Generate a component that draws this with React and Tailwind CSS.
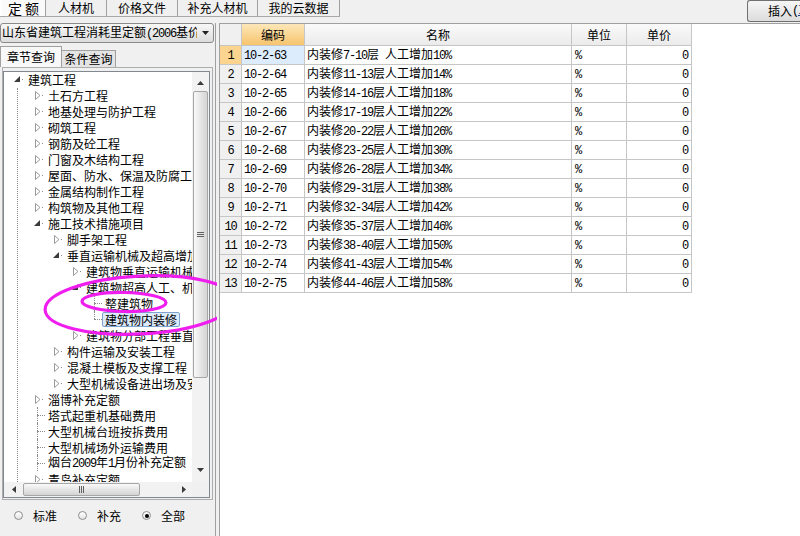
import React from 'react';

const ASCII = /^[\x00-\x7F]+$/;
function Mix({ t }) {
  return (
    <span className="whitespace-pre">
      {t
        .split(/([\x00-\x7F]+)/)
        .filter(Boolean)
        .map((p, i) =>
          ASCII.test(p) ? (
            <span key={i} className="font-['Liberation_Mono',monospace] text-[12px] tracking-[-1.2px]">
              {p}
            </span>
          ) : (
            <React.Fragment key={i}>{p}</React.Fragment>
          )
        )}
    </span>
  );
}

const tree = [
  { l: 0, t: '建筑工程', k: 'open' },
  { l: 1, t: '土石方工程', k: 'closed' },
  { l: 1, t: '地基处理与防护工程', k: 'closed' },
  { l: 1, t: '砌筑工程', k: 'closed' },
  { l: 1, t: '钢筋及砼工程', k: 'closed' },
  { l: 1, t: '门窗及木结构工程', k: 'closed' },
  { l: 1, t: '屋面、防水、保温及防腐工程', k: 'closed' },
  { l: 1, t: '金属结构制作工程', k: 'closed' },
  { l: 1, t: '构筑物及其他工程', k: 'closed' },
  { l: 1, t: '施工技术措施项目', k: 'open' },
  { l: 2, t: '脚手架工程', k: 'closed' },
  { l: 2, t: '垂直运输机械及超高增加费', k: 'open' },
  { l: 3, t: '建筑物垂直运输机械', k: 'closed' },
  { l: 3, t: '建筑物超高人工、机械增加', k: 'open' },
  { l: 4, t: '整建筑物', k: 'leaf' },
  { l: 4, t: '建筑物内装修', k: 'leaf', sel: true, last: true },
  { l: 3, t: '建筑物分部工程垂直运输', k: 'closed' },
  { l: 2, t: '构件运输及安装工程', k: 'closed' },
  { l: 2, t: '混凝土模板及支撑工程', k: 'closed' },
  { l: 2, t: '大型机械设备进出场及安拆', k: 'closed' },
  { l: 1, t: '淄博补充定额', k: 'closed' },
  { l: 1, t: '塔式起重机基础费用', k: 'leaf' },
  { l: 1, t: '大型机械台班按拆费用', k: 'leaf' },
  { l: 1, t: '大型机械场外运输费用', k: 'leaf' },
  { l: 1, t: '烟台2009年1月份补充定额', k: 'leaf' },
  { l: 1, t: '青岛补充定额', k: 'closed' },
];

const indent = ['w-[10px]', 'w-[30px]', 'w-[49px]', 'w-[68px]', 'w-[87px]'];

function TreeRow({ n }) {
  return (
    <div className="flex h-[16px] shrink-0 items-center whitespace-nowrap">
      <span className={`${indent[n.l]} shrink-0`} />
      <span className="relative h-[16px] w-[11px] shrink-0">
        {n.k === 'closed' && (
          <>
            <svg className="absolute left-[1px] top-[4px]" width="6" height="9">
              <polygon points="0.5,0.5 5,4.5 0.5,8.5" fill="white" stroke="#9a9a9a" strokeWidth="1" />
            </svg>
            <span className="absolute left-[8px] top-[8px] h-px w-px bg-[#8a8a8a]" />
          </>
        )}
        {n.k === 'open' && (
          <>
            <svg className="absolute left-[0px] top-[5px]" width="6" height="6">
              <polygon points="6,0 6,6 0,6" fill="#3a3a3a" />
            </svg>
            <span className="absolute left-[8px] top-[8px] h-px w-px bg-[#8a8a8a]" />
          </>
        )}
        {n.k === 'leaf' && (
          <>
            <span className="absolute left-[3px] top-[8px] w-[8px] border-t border-dotted border-[#8a8a8a]" />
            <span
              className={`absolute left-[3px] top-0 border-l border-dotted border-[#8a8a8a] ${
                n.last ? 'h-[8px]' : 'h-[16px]'
              }`}
            />
          </>
        )}
      </span>
      <span
        className={`border px-[2px] leading-[13px] ${
          n.sel ? 'rounded-[2px] border-[#7da2ce] bg-[#dcebfc]' : 'border-transparent'
        }`}
      >
        <Mix t={n.t} />
      </span>
    </div>
  );
}

function VScroll() {
  return (
    <div className="flex w-[17px] shrink-0 flex-col bg-[#f2f2f2]">
      <div className="flex h-[19px] shrink-0 items-start justify-center pt-[9px]">
        <svg width="7" height="4">
          <polygon points="3.5,0 7,4 0,4" fill="#3a3a3a" />
        </svg>
      </div>
      <div className="mx-[1px] flex h-[287px] shrink-0 items-center justify-center rounded-[2px] border border-[#a6a6a6] bg-linear-to-r from-[#f9f9f9] to-[#d4d4d4]">
        <div className="flex flex-col gap-[1px]">
          <span className="h-px w-[7px] bg-[#606060]" />
          <span className="h-px w-[7px] bg-[#606060]" />
          <span className="h-px w-[7px] bg-[#606060]" />
        </div>
      </div>
      <div className="flex-1" />
      <div className="flex h-[17px] shrink-0 items-start justify-center pt-[3px]">
        <svg width="7" height="4">
          <polygon points="0,0 7,0 3.5,4" fill="#3a3a3a" />
        </svg>
      </div>
    </div>
  );
}

function HScroll() {
  return (
    <div className="flex h-[15px] shrink-0 bg-[#f2f2f2]">
      <div className="flex w-[188px] items-center">
        <div className="flex w-[19px] shrink-0 justify-center">
          <svg width="4" height="7">
            <polygon points="4,0 4,7 0,3.5" fill="#3a3a3a" />
          </svg>
        </div>
        <div className="flex h-[13px] w-[117px] shrink-0 items-center justify-center rounded-[2px] border border-[#a6a6a6] bg-linear-to-b from-[#f9f9f9] to-[#d4d4d4]">
          <div className="flex gap-[1px]">
            <span className="h-[7px] w-px bg-[#606060]" />
            <span className="h-[7px] w-px bg-[#606060]" />
            <span className="h-[7px] w-px bg-[#606060]" />
          </div>
        </div>
        <div className="flex-1" />
        <div className="flex w-[17px] shrink-0 justify-center">
          <svg width="4" height="7">
            <polygon points="0,0 4,3.5 0,7" fill="#3a3a3a" />
          </svg>
        </div>
      </div>
      <div className="flex-1 bg-[#f0f0f0]" />
    </div>
  );
}

function Radio({ label, checked }) {
  return (
    <div className="flex items-center gap-[10px]">
      <span className="flex h-[9px] w-[9px] items-center justify-center rounded-full border border-[#8e8e8e] bg-linear-to-b from-[#ffffff] to-[#e4e4e4]">
        {checked && <span className="h-[4px] w-[4px] rounded-full bg-black" />}
      </span>
      <span>{label}</span>
    </div>
  );
}

const ranges = ['7-10层 ', '11-13层', '14-16层', '17-19层', '20-22层', '23-25层', '26-28层', '29-31层', '32-34层', '35-37层', '38-40层', '41-43层', '44-46层'];
const rows = ranges.map((r, i) => ({
  n: String(i + 1),
  code: `10-2-${63 + i}`,
  name: `内装修${r}人工增加${10 + i * 4}%`,
}));

const cell = 'shrink-0 border-r border-b border-[#c6c6c6] overflow-hidden whitespace-nowrap';

export default function App() {
  return (
    <div className="relative flex h-[536px] w-[800px] flex-col overflow-hidden bg-[#f0f0f0] font-['Noto_Sans_CJK_SC',sans-serif] text-[12px] leading-[16px] text-black">
      {/* top bar */}
      <div className="flex h-[23px] shrink-0 items-start">
        <div className="flex h-[17px] border-b border-[#a8a8a8]">
          <div className="flex h-[16px] w-[46px] items-center justify-center border-l-2 border-r border-l-white border-r-[#a0a0a0] bg-[#fafafa] pl-[3px] text-[14px] tracking-[3px]">
            定额
          </div>
          <div className="flex h-[16px] w-[61px] items-center justify-center border-r border-[#a0a0a0]">人材机</div>
          <div className="flex h-[16px] w-[71px] items-center justify-center border-r border-[#a0a0a0]">价格文件</div>
          <div className="flex h-[16px] w-[80px] items-center justify-center border-r border-[#a0a0a0]">补充人材机</div>
          <div className="flex h-[16px] w-[82px] items-center justify-center border-r border-[#a0a0a0]">我的云数据</div>
        </div>
        <div className="flex-1" />
        <div className="flex h-[22px] w-[53px] items-center overflow-hidden whitespace-nowrap rounded-l-[3px] border border-r-0 border-[#707070] bg-linear-to-b from-[#f6f6f6] to-[#dcdcdc] pl-[20px]">
          插入
          <span className="font-['Liberation_Mono',monospace] text-[12px] tracking-[-1.2px]">
            (<span className="text-[#1c3c8c] underline">I</span>)
          </span>
        </div>
      </div>

      {/* body */}
      <div className="flex min-h-0 flex-1">
        {/* left panel */}
        <div className="flex w-[215px] shrink-0 flex-col">
          <div className="flex h-[20px] w-[214px] shrink-0 items-center rounded-[3px] border border-[#8a8a8a] bg-linear-to-b from-[#f7f7f7] to-[#dcdcdc]">
            <div className="w-[196px] overflow-hidden whitespace-nowrap pl-[1px]">
              <Mix t="山东省建筑工程消耗里定额(2006基价)" />
            </div>
            <div className="flex flex-1 justify-center">
              <svg width="7" height="4">
                <polygon points="0,0 7,0 3.5,4" fill="#222" />
              </svg>
            </div>
          </div>
          <div className="mt-[1px] flex h-[23px] shrink-0 items-end">
            <div className="flex h-[21px] w-[62px] items-center border-x border-t border-[#a0a0a0] bg-[#f8f8f8] pl-[6px]">
              章节查询
            </div>
            <div className="flex h-[17px] w-[54px] items-center justify-center border-r border-t border-[#a0a0a0] bg-[#e4e4e4]">
              条件查询
            </div>
          </div>
          <div className="ml-[2px] flex h-[433px] w-[211px] shrink-0 flex-col border border-[#adadad] pb-[1px] pr-[2px] pt-[3px]">
            <div className="flex min-h-0 flex-1 flex-col border border-[#828790] bg-white">
              <div className="flex min-h-0 flex-1">
                <div className="relative w-[188px] shrink-0 overflow-hidden">
                  <span className="absolute bottom-0 left-[13px] top-[16px] border-l border-dotted border-[#8a8a8a]" />
                  <div className="-mt-px flex flex-col">
                    {tree.map((n, i) => (
                      <TreeRow key={i} n={n} />
                    ))}
                  </div>
                </div>
                <VScroll />
              </div>
              <HScroll />
            </div>
          </div>
          <div className="flex flex-1 items-center gap-[21px] pb-[5px] pl-[14px]">
            <Radio label="标准" />
            <Radio label="补充" />
            <Radio label="全部" checked />
          </div>
        </div>

        {/* splitter */}
        <div className="w-[5px] shrink-0 border-x border-[#a0a0a0]" />

        {/* table */}
        <div className="flex flex-1 flex-col border-t border-[#a0a0a0] bg-white">
          <div className="flex h-[22px] shrink-0">
            <div className={`${cell} w-[22px] bg-[#f0f0f0]`} />
            <div className={`${cell} flex w-[63px] items-center justify-center bg-linear-to-b from-[#fde7b8] to-[#f6c46c]`}>编码</div>
            <div className={`${cell} flex w-[267px] items-center justify-center bg-linear-to-b from-[#fafafa] to-[#ebebeb]`}>名称</div>
            <div className={`${cell} flex w-[55px] items-center justify-center bg-linear-to-b from-[#fafafa] to-[#ebebeb]`}>单位</div>
            <div className={`${cell} flex w-[65px] items-center justify-center bg-linear-to-b from-[#fafafa] to-[#ebebeb]`}>单价</div>
          </div>
          {rows.map((r, i) => (
            <div key={i} className="flex h-[19px] shrink-0">
              <div className={`${cell} flex w-[22px] items-center justify-center ${i === 0 ? 'bg-[#fbd48f]' : 'bg-[#f0f0f0]'}`}>
                <Mix t={r.n} />
              </div>
              <div className={`${cell} flex w-[63px] items-center pl-[2px] ${i === 0 ? 'bg-[#ddecfd]' : ''}`}>
                <Mix t={r.code} />
              </div>
              <div className={`${cell} flex w-[267px] items-center pl-[2px]`}>
                <Mix t={r.name} />
              </div>
              <div className={`${cell} flex w-[55px] items-center pl-[3px]`}>
                <Mix t="%" />
              </div>
              <div className={`${cell} flex w-[65px] items-center justify-end pr-[3px]`}>
                <Mix t="0" />
              </div>
            </div>
          ))}
        </div>
      </div>

      {/* annotation ellipses */}
      <svg className="pointer-events-none absolute left-0 top-0" width="217" height="536">
        <ellipse cx="140" cy="305" rx="95" ry="29" transform="rotate(-3 140 305)" fill="none" stroke="#ef1eef" strokeWidth="3.2" />
        <ellipse cx="124" cy="302" rx="42" ry="9.5" transform="rotate(1 124 302)" fill="none" stroke="#ef1eef" strokeWidth="3.2" />
      </svg>
    </div>
  );
}
